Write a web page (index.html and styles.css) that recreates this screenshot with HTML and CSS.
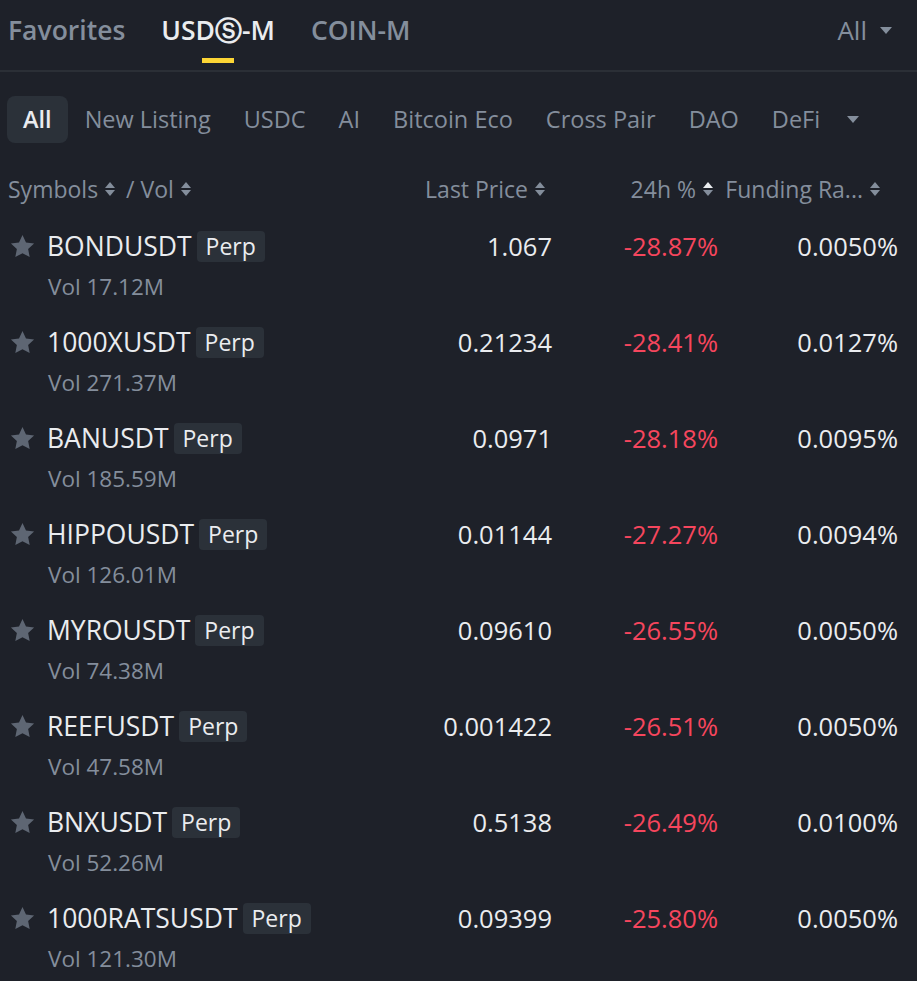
FILE: index.html
```html
<!DOCTYPE html>
<html>
<head>
<meta charset="utf-8">
<link rel="stylesheet" href="styles.css">
</head>
<body>
<div class="panel">
  <div class="tabs">
    <div class="tab">Favorites</div>
    <div class="tab active">USDⓈ-M</div>
    <div class="tab">COIN-M</div>
    <div class="spacer"></div>
    <div class="tab-all">All <span class="caret"></span></div>
  </div>

  <div class="cats">
    <div class="cat active">All</div>
    <div class="cat">New Listing</div>
    <div class="cat">USDC</div>
    <div class="cat">AI</div>
    <div class="cat">Bitcoin Eco</div>
    <div class="cat">Cross Pair</div>
    <div class="cat">DAO</div>
    <div class="cat">DeFi</div>
    <div class="cat-more"><span class="caret"></span></div>
  </div>

  <div class="grid head">
    <div class="h h-sym">Symbols <span class="sort"><i class="up"></i><i class="dn"></i></span> <span class="sep">/ Vol</span> <span class="sort"><i class="up"></i><i class="dn"></i></span></div>
    <div class="h h-price">Last Price <span class="sort"><i class="up"></i><i class="dn"></i></span></div>
    <div class="h h-chg">24h % <span class="sort"><i class="up on"></i><i class="dn"></i></span></div>
    <div class="h h-fund">Funding Ra... <span class="sort"><i class="up"></i><i class="dn"></i></span></div>
  </div>

  <div class="list">
    <div class="grid row">
      <div class="sym"><div class="line"><svg class="star" viewBox="0 0 24 24"><path d="M12 1.8l3.1 6.6 7.2.9-5.3 5 1.4 7.1L12 17.9l-6.4 3.5 1.4-7.1-5.3-5 7.2-.9z"/></svg><span class="name">BONDUSDT</span><span class="badge">Perp</span></div><div class="vol">Vol 17.12M</div></div>
      <div class="num">1.067</div><div class="num red">-28.87%</div><div class="num">0.0050%</div>
    </div>
    <div class="grid row">
      <div class="sym"><div class="line"><svg class="star" viewBox="0 0 24 24"><path d="M12 1.8l3.1 6.6 7.2.9-5.3 5 1.4 7.1L12 17.9l-6.4 3.5 1.4-7.1-5.3-5 7.2-.9z"/></svg><span class="name">1000XUSDT</span><span class="badge">Perp</span></div><div class="vol">Vol 271.37M</div></div>
      <div class="num">0.21234</div><div class="num red">-28.41%</div><div class="num">0.0127%</div>
    </div>
    <div class="grid row">
      <div class="sym"><div class="line"><svg class="star" viewBox="0 0 24 24"><path d="M12 1.8l3.1 6.6 7.2.9-5.3 5 1.4 7.1L12 17.9l-6.4 3.5 1.4-7.1-5.3-5 7.2-.9z"/></svg><span class="name">BANUSDT</span><span class="badge">Perp</span></div><div class="vol">Vol 185.59M</div></div>
      <div class="num">0.0971</div><div class="num red">-28.18%</div><div class="num">0.0095%</div>
    </div>
    <div class="grid row">
      <div class="sym"><div class="line"><svg class="star" viewBox="0 0 24 24"><path d="M12 1.8l3.1 6.6 7.2.9-5.3 5 1.4 7.1L12 17.9l-6.4 3.5 1.4-7.1-5.3-5 7.2-.9z"/></svg><span class="name">HIPPOUSDT</span><span class="badge">Perp</span></div><div class="vol">Vol 126.01M</div></div>
      <div class="num">0.01144</div><div class="num red">-27.27%</div><div class="num">0.0094%</div>
    </div>
    <div class="grid row">
      <div class="sym"><div class="line"><svg class="star" viewBox="0 0 24 24"><path d="M12 1.8l3.1 6.6 7.2.9-5.3 5 1.4 7.1L12 17.9l-6.4 3.5 1.4-7.1-5.3-5 7.2-.9z"/></svg><span class="name">MYROUSDT</span><span class="badge">Perp</span></div><div class="vol">Vol 74.38M</div></div>
      <div class="num">0.09610</div><div class="num red">-26.55%</div><div class="num">0.0050%</div>
    </div>
    <div class="grid row">
      <div class="sym"><div class="line"><svg class="star" viewBox="0 0 24 24"><path d="M12 1.8l3.1 6.6 7.2.9-5.3 5 1.4 7.1L12 17.9l-6.4 3.5 1.4-7.1-5.3-5 7.2-.9z"/></svg><span class="name">REEFUSDT</span><span class="badge">Perp</span></div><div class="vol">Vol 47.58M</div></div>
      <div class="num">0.001422</div><div class="num red">-26.51%</div><div class="num">0.0050%</div>
    </div>
    <div class="grid row">
      <div class="sym"><div class="line"><svg class="star" viewBox="0 0 24 24"><path d="M12 1.8l3.1 6.6 7.2.9-5.3 5 1.4 7.1L12 17.9l-6.4 3.5 1.4-7.1-5.3-5 7.2-.9z"/></svg><span class="name">BNXUSDT</span><span class="badge">Perp</span></div><div class="vol">Vol 52.26M</div></div>
      <div class="num">0.5138</div><div class="num red">-26.49%</div><div class="num">0.0100%</div>
    </div>
    <div class="grid row">
      <div class="sym"><div class="line"><svg class="star" viewBox="0 0 24 24"><path d="M12 1.8l3.1 6.6 7.2.9-5.3 5 1.4 7.1L12 17.9l-6.4 3.5 1.4-7.1-5.3-5 7.2-.9z"/></svg><span class="name">1000RATSUSDT</span><span class="badge">Perp</span></div><div class="vol">Vol 121.30M</div></div>
      <div class="num">0.09399</div><div class="num red">-25.80%</div><div class="num">0.0050%</div>
    </div>
  </div>
</div>
</body>
</html>
```

FILE: styles.css
```css
html, body {
  margin: 0;
  padding: 0;
  background: #1e2129;
}
body {
  font-family: "Open Sans", "Noto Sans", sans-serif;
  color: #eaecef;
  overflow: hidden;
}
.panel {
  width: 917px;
  height: 981px;
}

/* top tabs */
.tabs {
  display: flex;
  align-items: center;
  height: 60px;
  padding: 0 25px 10px 8px;
  border-bottom: 2px solid #2b2f36;
  gap: 36px;
}
.tab {
  position: relative;
  font-size: 26.5px;
  font-weight: 600;
  color: #848e9c;
  line-height: 36px;
}
.tab.active {
  color: #eaecef;
}
.tab.active::after {
  content: "";
  position: absolute;
  left: 50%;
  margin-left: -16px;
  width: 32px;
  height: 5px;
  top: 46px;
  background: #fcd535;
}
.spacer { flex: 1; }
.tab-all {
  display: flex;
  align-items: center;
  gap: 13px;
  font-size: 26px;
  font-weight: 500;
  color: #848e9c;
}
.caret {
  display: inline-block;
  width: 0;
  height: 0;
  border-left: 6px solid transparent;
  border-right: 6px solid transparent;
  border-top: 7px solid #848e9c;
}

/* categories */
.cats {
  display: flex;
  align-items: center;
  padding: 24px 0 0 7px;
  gap: 1px;
}
.cat {
  height: 47px;
  line-height: 47px;
  padding: 0 16px;
  font-size: 23.5px;
  font-weight: 500;
  color: #848e9c;
  border-radius: 8px;
  white-space: nowrap;
}
.cat.active {
  background: #2b3139;
  color: #eaecef;
  font-weight: 600;
}
.cat-more {
  padding-left: 10px;
  display: flex;
  align-items: center;
}

/* grid */
.grid {
  display: grid;
  grid-template-columns: 394px 150px 166px 180px;
  padding: 0 19px 0 8px;
}
.head {
  height: 44px;
  margin-top: 24px;
  align-items: center;
  font-size: 23px;
  color: #848e9c;
}
.h {
  display: flex;
  align-items: center;
  white-space: nowrap;
}
.h-sym { gap: 7px; }
.h-price { justify-content: flex-end; padding-right: 7px; gap: 7px; }
.h-chg { justify-content: flex-end; padding-right: 5px; gap: 7px; }
.h-fund { justify-content: flex-end; padding-right: 18px; gap: 7px; }
.sep { margin-left: 4px; }
.sort {
  display: inline-flex;
  flex-direction: column;
  gap: 2px;
}
.sort i {
  display: block;
  width: 0;
  height: 0;
  border-left: 5px solid transparent;
  border-right: 5px solid transparent;
}
.sort i.up { border-bottom: 6px solid #848e9c; }
.sort i.dn { border-top: 6px solid #848e9c; }
.sort i.up.on { border-bottom-color: #eaecef; }

/* rows */
.row {
  height: 96px;
  box-sizing: border-box;
  padding-top: 18px;
  align-items: start;
}
.line {
  display: flex;
  align-items: center;
  height: 34px;
}
.star {
  width: 27px;
  height: 27px;
  fill: #5e6673;
  margin: 0 11px 0 1px;
}
.name {
  font-size: 26.5px;
  color: #eaecef;
}
.badge {
  margin-left: 5px;
  height: 31px;
  line-height: 31px;
  padding: 0 9px;
  background: #2b3139;
  border-radius: 4px;
  font-size: 23px;
  color: #eaecef;
}
.vol {
  margin-top: 10px;
  margin-left: 40px;
  line-height: 28px;
  font-size: 22.5px;
  color: #848e9c;
}
.num {
  text-align: right;
  font-size: 25.5px;
  line-height: 34px;
  color: #eaecef;
}
.num.red { color: #f6465d; }
```
